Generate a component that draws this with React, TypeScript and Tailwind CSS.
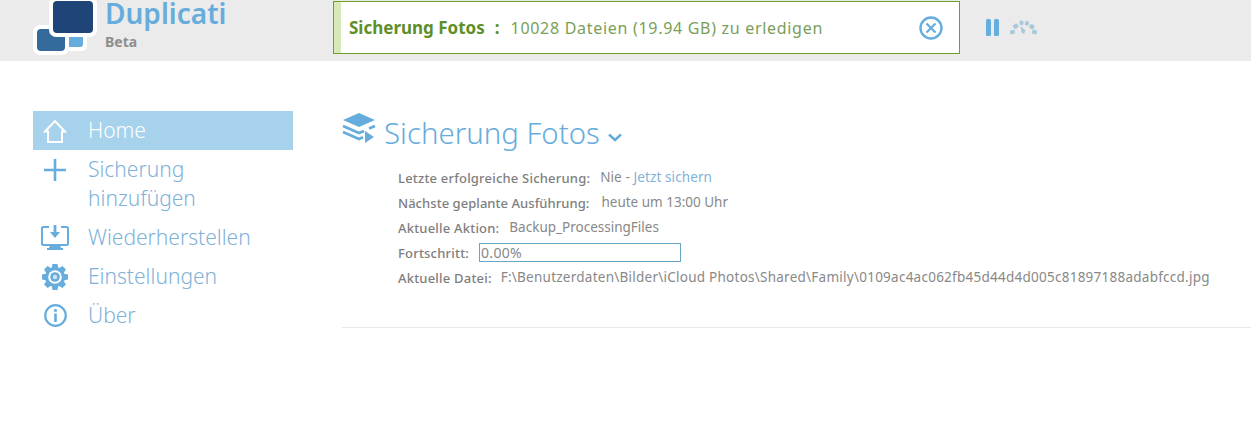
import React from "react";

const font = { fontFamily: '"Noto Sans", sans-serif' };

function Logo() {
  return (
    <svg width="64" height="56" viewBox="0 0 64 56" className="shrink-0">
      <rect x="30" y="26" width="24" height="25" rx="5" fill="#fff" />
      <rect x="34" y="30" width="16" height="17" rx="3" fill="#66acdc" />
      <rect x="0" y="25" width="36" height="30" rx="7" fill="#fff" />
      <rect x="4" y="29" width="28" height="22" rx="4" fill="#346a9c" />
      <rect x="16" y="-3" width="48" height="40" rx="7" fill="#fff" />
      <rect x="20" y="1" width="40" height="32" rx="4" fill="#1f4477" />
    </svg>
  );
}

function Label({ children, tracking = "tracking-[0.2px]" }: { children: React.ReactNode; tracking?: string }) {
  return <span className={`text-[13px] font-medium text-[#7e7e7e] ${tracking}`}>{children}</span>;
}

function HomeIcon() {
  return (
    <svg width="24" height="24" viewBox="0 0 24 24" fill="none" stroke="#fff" strokeWidth="2">
      <path d="M2 12.500 12 2l10 10.500h-3V23H5V12.500z" />
    </svg>
  );
}
function PlusIcon() {
  return (
    <svg width="22" height="22" viewBox="0 0 22 22" fill="none" stroke="#66acdc" strokeWidth="2.600">
      <path d="M0 11h22M11 0v22" />
    </svg>
  );
}
function RestoreIcon() {
  return (
    <svg width="28" height="25" viewBox="0 0 28 25" fill="none">
      <path d="M8 2H2.200A1.200 1.200 0 0 0 1 3.200v15.600A1.200 1.200 0 0 0 2.200 20h23.600a1.200 1.200 0 0 0 1.200-1.200V3.200A1.200 1.200 0 0 0 25.800 2H20" stroke="#66acdc" strokeWidth="2" />
      <path d="M12.600 0h2.800v7H19l-5 6-5-6h3.600z" fill="#66acdc" />
      <path d="M9 20h10l1 3h2v2H6v-2h2z" fill="#66acdc" />
    </svg>
  );
}
function GearIcon() {
  const angles = [0, 45, 90, 135];
  return (
    <svg width="26" height="26" viewBox="0 0 26 26">
      {angles.map((a) => (
        <path key={a} d="M10.500 0h5l1 5h-7zM9.500 21h7l-1 5h-5z" fill="#66acdc" transform={`rotate(${a} 13 13)`} />
      ))}
      <circle cx="13" cy="13" r="10" fill="#66acdc" />
      <circle cx="13" cy="13" r="6.800" fill="#fff" />
      <circle cx="13" cy="13" r="4.800" fill="#66acdc" />
      <circle cx="13" cy="13" r="2.200" fill="#cfe4f3" />
    </svg>
  );
}
function InfoIcon() {
  return (
    <svg width="23" height="23" viewBox="0 0 23 23" fill="none">
      <circle cx="11.500" cy="11.500" r="10.300" stroke="#66acdc" strokeWidth="2.200" />
      <rect x="10.200" y="5" width="2.600" height="2.800" fill="#66acdc" />
      <rect x="10.200" y="9.500" width="2.600" height="8.500" fill="#66acdc" />
    </svg>
  );
}
function StackIcon() {
  return (
    <svg width="34" height="30" viewBox="0 0 34 30" fill="#66acdc">
      <path d="M17 0l16 7L17 14 1 7z" />
      <path d="M1 13l16 7 5-2M33 13l-6 2.500M1 19l16 7 4-1.700" fill="none" stroke="#66acdc" strokeWidth="2.800" />
      <path d="M23 18v12l9-6z" />
    </svg>
  );
}

function NavItem({ icon, children, active }: { icon: React.ReactNode; children: React.ReactNode; active?: boolean }) {
  return (
    <div className={`flex items-start pr-4 ${active ? "bg-[#a6d2eb] text-white" : "text-[#7fb2d9]"}`}>
      <div className="w-[44px] h-[39px] flex items-center justify-center shrink-0">{icon}</div>
      <div className="ml-[11px] text-[21px] leading-[29px] py-[5px] font-light">{children}</div>
    </div>
  );
}

function Value({ children, extra = "ml-[10px]" }: { children: React.ReactNode; extra?: string }) {
  return <span className={`-mt-[2px] text-[13.5px] ${extra}`}>{children}</span>;
}

export default function App() {
  return (
    <div className="w-[1251px] h-[448px] overflow-hidden bg-white" style={font}>
      <header className="h-[61px] bg-[#ebebeb] flex items-start overflow-hidden">
        <div className="w-[333px] flex items-start pl-[33px] shrink-0">
          <Logo />
          <div className="ml-[8px]">
            <div className="text-[28px] leading-[26px] font-semibold text-[#66acdc]">Duplicati</div>
            <div className="text-[14px] leading-[20px] mt-[6px] font-bold text-[#8e8e8e]">Beta</div>
          </div>
        </div>
        <div className="mt-[1px] w-[627px] h-[53px] border border-[#6f9e2a] bg-white flex items-center relative shrink-0">
          <div className="w-[7px] h-full bg-[#d7e9b9] shrink-0" />
          <span className="ml-[8px] text-[17px] font-bold text-[#5f8f28]">Sicherung Fotos</span>
          <span className="ml-[10px] text-[17px] font-bold text-[#5f8f28]">:</span>
          <span className="ml-[11px] text-[16px] tracking-[0.7px] text-[#7a9e58]">10028 Dateien (19.94 GB) zu erledigen</span>
          <svg width="24" height="24" viewBox="0 0 24 24" fill="none" stroke="#66acdc" className="absolute right-[16px] top-[14px]">
            <circle cx="12" cy="12" r="10.500" strokeWidth="2.400" />
            <path d="M7.500 7.500l9 9M16.500 7.500l-9 9" strokeWidth="2.200" />
          </svg>
        </div>
        <div className="flex items-center ml-[26px] mt-[19px] gap-[11px]">
          <svg width="14" height="17" viewBox="0 0 14 17" fill="#66acdc">
            <rect x="0" y="0" width="5" height="17" rx="1.500" />
            <rect x="8" y="0" width="5" height="17" rx="1.500" />
          </svg>
          <svg width="27" height="15" viewBox="0 0 27 15" fill="#a9c8dc" className="-ml-[1px]">
            <rect x="0" y="10" width="5" height="4" rx="1.500" transform="rotate(-10 2.500 12)" />
            <rect x="3" y="4" width="5" height="4.500" rx="1.500" transform="rotate(-40 5.500 6)" />
            <rect x="9.500" y="0.500" width="4" height="4.500" rx="1.500" />
            <rect x="15" y="1" width="4" height="4.500" rx="1.500" transform="rotate(15 17 3)" />
            <rect x="19.500" y="4.500" width="5" height="4.500" rx="1.500" transform="rotate(40 22 6.500)" />
            <rect x="22" y="10" width="5" height="4" rx="1.500" transform="rotate(10 24.500 12)" />
            <path d="M10.500 6l5 4.500-1.500 3.500-2.500-1.500z" />
          </svg>
        </div>
      </header>
      <div className="flex">
        <nav className="w-[260px] ml-[33px] mt-[50px] shrink-0 flex flex-col">
          <NavItem icon={<HomeIcon />} active>Home</NavItem>
          <NavItem icon={<PlusIcon />}>Sicherung<br />hinzufügen</NavItem>
          <NavItem icon={<RestoreIcon />}>Wiederherstellen</NavItem>
          <NavItem icon={<GearIcon />}>Einstellungen</NavItem>
          <NavItem icon={<InfoIcon />}>Über</NavItem>
        </nav>
        <main className="ml-[49px] flex-1 mt-[52px]">
          <div className="h-[215px] border-b border-[#e9e9e9]">
            <div className="flex items-start">
              <StackIcon />
              <span className="ml-[8px] mt-[1px] text-[29.4px] leading-[38px] font-light text-[#66acdc]">Sicherung Fotos</span>
              <svg width="14" height="9" viewBox="0 0 14 9" fill="none" stroke="#66acdc" strokeWidth="2.500" className="ml-[8px] mt-[20px]">
                <path d="M1 1.500l6 5.500 6-5.500" />
              </svg>
            </div>
            <div className="ml-[56px] mt-[14px] flex flex-col text-[#888888]">
              <div className="h-[25px] flex items-center">
                <Label>Letzte erfolgreiche Sicherung:</Label>
                <Value extra="ml-[10px] tracking-[0.1px]">Nie - <span className="text-[#7fb2d9]">Jetzt sichern</span></Value>
              </div>
              <div className="h-[25px] flex items-center">
                <Label tracking="tracking-[0.05px]">Nächste geplante Ausführung:</Label>
                <Value extra="ml-[12px]">heute um 13:00 Uhr</Value>
              </div>
              <div className="h-[25px] flex items-center">
                <Label>Aktuelle Aktion:</Label>
                <Value>Backup_ProcessingFiles</Value>
              </div>
              <div className="h-[25px] flex items-center">
                <Label>Fortschritt:</Label>
                <div className="ml-[10px] -mt-[3px] w-[202px] h-[19px] border border-[#66a5c4] text-[14px] leading-[17px] pl-[1px] tracking-[0.3px] text-[#888888]">0.00%</div>
              </div>
              <div className="h-[25px] flex items-center whitespace-nowrap">
                <Label>Aktuelle Datei:</Label>
                <Value extra="ml-[9px] tracking-[0.25px]">F:\Benutzerdaten\Bilder\iCloud Photos\Shared\Family\0109ac4ac062fb45d44d4d005c81897188adabfccd.jpg</Value>
              </div>
            </div>
          </div>
        </main>
      </div>
    </div>
  );
}
